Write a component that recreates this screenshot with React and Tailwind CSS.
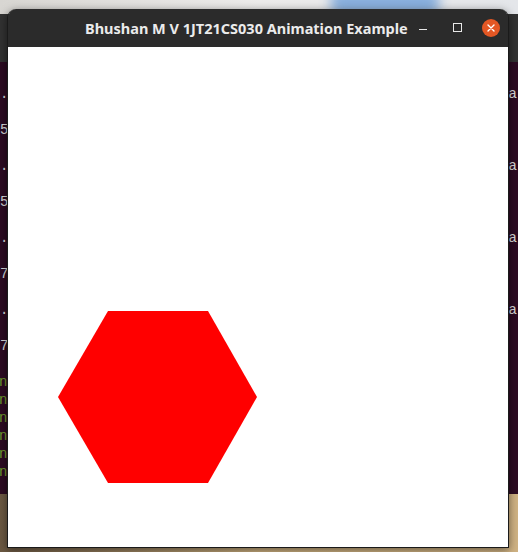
import React from "react";

export default function App() {
  const leftRows = [".", "5", ".", "5", ".", "7", ".", "7"];
  const greens = [0, 1, 2, 3, 4, 5];
  const rightRows = ["a", "a", "a", "a"];
  return (
    <div className="relative w-[518px] h-[552px] overflow-hidden bg-[#2c0b22] font-['Liberation_Mono',monospace]">
      {/* desktop background */}
      <div className="absolute inset-0 flex flex-col">
        <div className="h-[14px] bg-gradient-to-r from-[#d8d6d2] via-[#ecebea] to-[#e4e6ea]" />
        <div className="h-[48px] bg-[#323232]" />
        <div className="flex-1 flex justify-between">
          <div className="flex flex-col pt-[24px] text-[14px] leading-[16px] text-[#d8d8d8]">
            <div className="flex flex-col gap-[20px]">
              {leftRows.map((t, i) => (
                <div key={i}>{t}</div>
              ))}
            </div>
            <div className="flex flex-col gap-[2px] mt-[20px] -ml-[1px] text-[#6f9a2c]">
              {greens.map((i) => (
                <div key={i}>n'</div>
              ))}
            </div>
          </div>
          <div className="flex flex-col gap-[56px] pt-[24px] pr-[1px] text-[14px] leading-[16px] text-[#d8d8d8]">
            {rightRows.map((t, i) => (
              <div key={i}>{t}</div>
            ))}
          </div>
        </div>
        <div className="h-[58px] bg-gradient-to-r from-[#6b5842] via-[#c9ad7e] to-[#cfb283]" />
      </div>
      <div className="absolute left-[330px] top-[-10px] w-[110px] h-[26px] rounded-full bg-[#6f9fd8] blur-[6px] opacity-80" />

      {/* application window */}
      <div className="absolute left-[7px] top-[9px] w-[502px] h-[539px] flex flex-col rounded-t-[9px] overflow-hidden border-x border-b border-[#1a1a1a] shadow-[0_2px_8px_rgba(0,0,0,0.5)] font-['Noto_Sans',sans-serif]">
        <div className="h-[38px] bg-[#2b2b2b] flex items-center pl-[77px] shrink-0">
          <div className="text-[14.5px] font-bold text-[#ebebeb] leading-[18px] whitespace-nowrap -mt-[1px]">
            Bhushan M V 1JT21CS030 Animation Example
          </div>
          <div className="ml-[11px] w-[8px] h-[1.5px] bg-[#e8e8e8] mt-[3px]" />
          <div className="ml-[26px] w-[9px] h-[9px] border border-[#e8e8e8] -mt-[1px]" />
          <div className="ml-[20px] w-[18px] h-[18px] rounded-full bg-[#e35724] flex items-center justify-center -mt-[1px]">
            <svg width="8" height="8" viewBox="0 0 8 8">
              <path d="M1 1 L7 7 M7 1 L1 7" stroke="#ffffff" strokeWidth="1.4" strokeLinecap="round" />
            </svg>
          </div>
        </div>
        <div className="flex-1 bg-white">
          <svg width="500" height="500" viewBox="0 0 500 500">
            <polygon points="100,264 200,264 249,350 200,436 100,436 50,350" fill="#ff0000" />
          </svg>
        </div>
      </div>
    </div>
  );
}
